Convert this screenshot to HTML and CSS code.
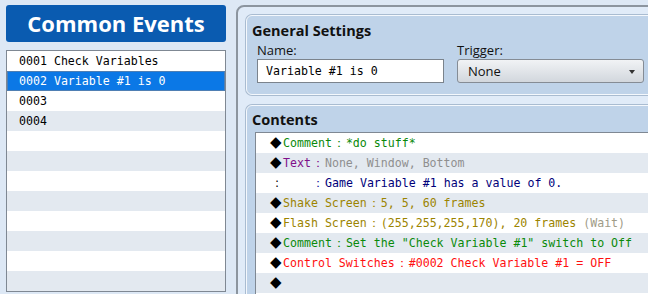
FILE: index.html
```html
<!DOCTYPE html>
<html lang="en">
<head>
    <meta charset="UTF-8">
    <meta name="viewport" content="width=device-width, initial-scale=1.0">
    <title>Common Events</title>
    <link rel="stylesheet" href="styles.css">
</head>
<body>
    <div class="sidebar">
        <h1 class="sidebar-title">Common Events</h1>
        <ul class="event-list">
            <li>0001 Check Variables</li>
            <li class="selected">0002 Variable #1 is 0</li>
            <li>0003</li>
            <li>0004</li>
            <li></li>
            <li></li>
            <li></li>
            <li></li>
            <li></li>
            <li></li>
            <li></li>
            <li></li>
        </ul>
    </div>

    <div class="editor">
        <div class="group general">
            <h2>General Settings</h2>
            <div class="fields">
                <div class="field">
                    <label>Name:</label>
                    <div class="text-input">Variable #1 is 0</div>
                </div>
                <div class="field">
                    <label>Trigger:</label>
                    <div class="select">None<span class="arrow"></span></div>
                </div>
            </div>
        </div>

        <div class="group contents">
            <h2>Contents</h2>
            <ul class="command-list">
                <li class="c-comment"><span class="mark">◆</span>Comment<span class="sep">：</span>*do stuff*</li>
                <li class="c-text"><span class="mark">◆</span>Text<span class="sep">：</span><span class="muted">None, Window, Bottom</span></li>
                <li class="c-line"><span class="mark">:</span><span class="pad"></span><span class="sep">：</span>Game Variable #1 has a value of 0.</li>
                <li class="c-screen"><span class="mark">◆</span>Shake Screen<span class="sep">：</span>5, 5, 60 frames</li>
                <li class="c-screen"><span class="mark">◆</span>Flash Screen<span class="sep">：</span>(255,255,255,170), 20 frames <span class="wait">(Wait)</span></li>
                <li class="c-comment"><span class="mark">◆</span>Comment<span class="sep">：</span>Set the "Check Variable #1" switch to Off</li>
                <li class="c-switch"><span class="mark">◆</span>Control Switches<span class="sep">：</span>#0002 Check Variable #1 = OFF</li>
                <li><span class="mark">◆</span></li>
                <li></li>
            </ul>
        </div>
    </div>
</body>
</html>
```

FILE: styles.css
```css
body {
    margin: 0;
    height: 294px;
    overflow: hidden;
    display: flex;
    background-color: #dde8f5;
    font-family: 'Open Sans', 'Noto Sans', sans-serif;
}

ul {
    list-style: none;
    margin: 0;
    padding: 0;
}

/* left column */
.sidebar {
    width: 220px;
    height: 289px;
    flex: none;
    margin: 5px 0 0 6px;
    overflow: hidden;
}
.sidebar-title {
    margin: 0;
    height: 37px;
    line-height: 36px;
    background-color: #0a5bb0;
    border-radius: 3px;
    color: #ffffff;
    font-size: 22px;
    font-weight: bold;
    text-align: center;
}
.event-list {
    margin-top: 8px;
    background-color: #ffffff;
    border: 1px solid #7f8893;
    font-family: 'DejaVu Sans Mono', monospace;
    font-size: 11.6px;
}
.event-list li {
    height: 20px;
    line-height: 20px;
    padding-left: 12px;
    color: #000;
}
.event-list li:nth-child(even) {
    background-color: #e3e9f0;
}
.event-list li.selected {
    background-color: #0b78e6;
    box-shadow: inset 0 0 0 1px #4f7fb3;
    color: #ffffff;
}

/* right column */
.editor {
    flex: none;
    width: 520px;
    height: 300px;
    margin: 5px 0 0 10px;
    padding: 8px;
    border: 2px solid #8c959f;
    border-radius: 8px;
    background-color: #e0ebf8;
}
.group {
    background-color: #bfd3e9;
    border: 1px solid #f4f8fd;
    border-radius: 6px;
    box-shadow: 0 0 0 1px #a9bcd1;
}
.group h2 {
    margin: 0;
    font-size: 14.5px;
    font-weight: bold;
    color: #111;
    line-height: 20px;
}
.general {
    height: 73px;
    padding: 5px 0 0 5px;
}
.fields {
    display: flex;
    gap: 13px;
    padding-left: 5px;
    margin-top: 1px;
}
.field label {
    display: block;
    font-size: 13px;
    line-height: 17px;
    color: #111;
}
.text-input {
    width: 177px;
    height: 22px;
    line-height: 22px;
    padding-left: 8px;
    background-color: #ffffff;
    border: 1px solid #7b838c;
    font-family: 'DejaVu Sans Mono', monospace;
    font-size: 11.6px;
}
.select {
    position: relative;
    width: 175px;
    height: 22px;
    line-height: 22px;
    padding-left: 10px;
    border: 1px solid #858c95;
    border-radius: 3px;
    background: linear-gradient(#f1f3f5, #d2d7dd);
    font-size: 13px;
    color: #111;
}
.select .arrow {
    position: absolute;
    right: 8px;
    top: 10px;
    border-left: 3px solid transparent;
    border-right: 3px solid transparent;
    border-top: 4px solid #333;
}

.contents {
    margin-top: 10px;
    height: 200px;
    padding: 4px 0 0 5px;
}
.contents h2 {
    margin-bottom: 2px;
}
.command-list {
    margin-left: 3px;
    background-color: #ffffff;
    border: 1px solid #7f8893;
    font-family: 'DejaVu Sans Mono', monospace;
    font-size: 11.6px;
}
.command-list li {
    height: 20px;
    line-height: 21px;
    padding-left: 14px;
    white-space: pre;
    overflow: hidden;
}
.command-list li:nth-child(even) {
    background-color: #e3e9f0;
}
.mark {
    display: inline-block;
    width: 13px;
    color: #000;
    font-family: 'DejaVu Sans', sans-serif;
    font-size: 15px;
    line-height: 19px;
    vertical-align: top;
}
.c-line .mark {
    padding-left: 5px;
    width: 8px;
    font-size: 12px;
    line-height: 21px;
}
.pad {
    display: inline-block;
    width: 28px;
}
.sep {
    display: inline-block;
    width: 14px;
    text-align: center;
}
.c-comment { color: #0a8a0a; }
.c-text { color: #80108a; }
.c-text .muted { color: #8f8f8f; }
.c-line { color: #00007a; }
.c-line .sep { color: #1a1aa0; }
.c-screen { color: #9c8400; }
.c-screen .wait { color: #a09c88; }
.c-switch { color: #ff1010; }
```
